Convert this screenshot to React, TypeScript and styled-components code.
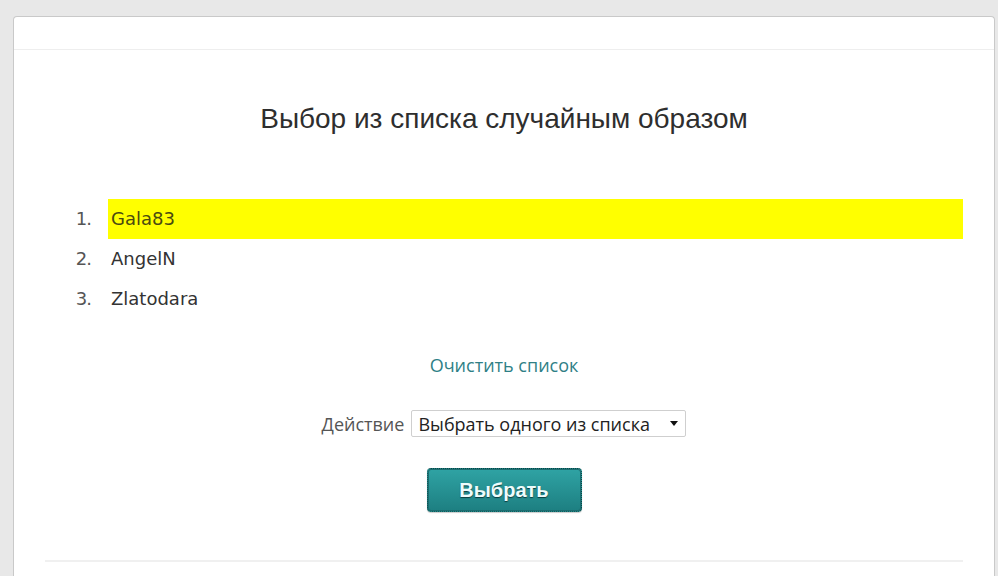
import React from "react";
import styled, { createGlobalStyle } from "styled-components";

const Global = createGlobalStyle`
  html, body { margin: 0; padding: 0; }
  body {
    background: #e8e8e8;
    width: 998px;
    height: 576px;
    overflow: hidden;
    font-family: "Liberation Sans", Arial, sans-serif;
  }
`;

const Page = styled.div`
  padding: 16px 3px 0 13px;
  height: 576px;
  box-sizing: border-box;
  display: flex;
`;

const Card = styled.div`
  flex: 1;
  background: #fff;
  border: 1px solid #c9c9c9;
  border-bottom: none;
  border-radius: 4px 4px 0 0;
  display: flex;
  flex-direction: column;
`;

const CardHeader = styled.div`
  height: 32px;
  border-bottom: 1px solid #eeeeee;
`;

const Body = styled.div`
  padding: 54px 31px 0 31px;
  display: flex;
  flex-direction: column;
`;

const Title = styled.h1`
  margin: 0;
  font-family: "Liberation Sans", Arial, sans-serif;
  font-weight: normal;
  font-size: 28px;
  line-height: 30px;
  color: #2e2e2e;
  text-align: center;
`;

const List = styled.ol`
  list-style: none;
  margin: 65px 0 0 0;
  padding: 0;
  font-family: "DejaVu Sans", Tahoma, sans-serif;
  font-size: 18px;
`;

const Row = styled.li`
  display: flex;
  height: 40px;
  line-height: 40px;
`;

const Num = styled.span`
  width: 63px;
  box-sizing: border-box;
  padding-right: 17px;
  text-align: right;
  color: #555;
  letter-spacing: -1px;
`;

const Name = styled.span<{ $hl?: boolean }>`
  flex: 1;
  padding-left: 3px;
  color: ${(p) => (p.$hl ? "#4a4a10" : "#333")};
  background: ${(p) => (p.$hl ? "#ffff00" : "transparent")};
`;

const Center = styled.div<{ $mt: number }>`
  margin-top: ${(p) => p.$mt}px;
  display: flex;
  justify-content: center;
  align-items: center;
  gap: 7px;
  font-family: "Open Sans", "Segoe UI", sans-serif;
  font-size: 18px;
`;

const ClearLink = styled.a`
  color: #2f7f86;
  text-decoration: none;
  line-height: 24px;
  font-size: 18px;
`;

const Label = styled.span`
  color: #555;
  font-size: 18px;
`;

const SelectBox = styled.div`
  width: 275px;
  height: 27px;
  box-sizing: border-box;
  border: 1px solid #cfcfcf;
  border-radius: 2px;
  display: flex;
  align-items: center;
  padding: 0 7px 0 6px;
  color: #222;
  font-size: 18px;
  background: #fff;
`;

const SelectText = styled.span`
  flex: 1;
  white-space: nowrap;
`;

const Arrow = styled.span`
  width: 0;
  height: 0;
  border-left: 4.5px solid transparent;
  border-right: 4.5px solid transparent;
  border-top: 5px solid #111;
`;

const Button = styled.button`
  width: 155px;
  height: 44px;
  border: 1px dotted #0c4244;
  border-radius: 4px;
  background: linear-gradient(#2fa3a4, #1d7f81);
  box-shadow: inset 0 0 0 1px #1c6d70, 0 1px 1px rgba(0,0,0,0.2);
  color: #eefcfc;
  font-family: "Liberation Sans", Arial, sans-serif;
  font-weight: bold;
  font-size: 20px;
  text-shadow: 0 1px 1px #0b3d3f;
  cursor: pointer;
`;

const Divider = styled.div`
  margin-top: 48px;
  height: 2px;
  background: #f0f0f0;
`;

const names = ["Gala83", "AngelN", "Zlatodara"];

export default function App() {
  return (
    <>
      <Global />
      <Page>
        <Card>
          <CardHeader />
          <Body>
            <Title>Выбор из списка случайным образом</Title>
            <List>
              {names.map((n, i) => (
                <Row key={n}>
                  <Num>{i + 1}.</Num>
                  <Name $hl={i === 0}>{n}</Name>
                </Row>
              ))}
            </List>
            <Center $mt={34}>
              <ClearLink href="#">Очистить список</ClearLink>
            </Center>
            <Center $mt={33}>
              <Label>Действие</Label>
              <SelectBox>
                <SelectText>Выбрать одного из списка</SelectText>
                <Arrow />
              </SelectBox>
            </Center>
            <Center $mt={31}>
              <Button>Выбрать</Button>
            </Center>
            <Divider />
          </Body>
        </Card>
      </Page>
    </>
  );
}
